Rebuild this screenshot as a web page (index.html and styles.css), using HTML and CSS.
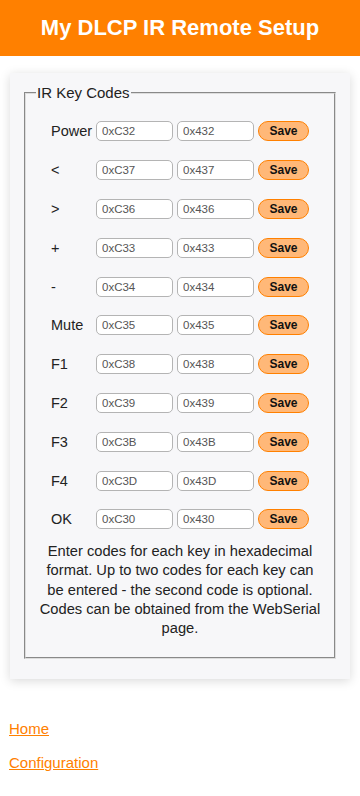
FILE: index.html
```html
<!DOCTYPE html>
<html lang="en">
<head>
  <meta charset="UTF-8" />
  <meta name="viewport" content="width=device-width, initial-scale=1" />
  <title>My DLCP IR Remote Setup</title>
  <link rel="stylesheet" href="styles.css">
</head>
<body>
  <header class="topbar">
    <h1>My DLCP IR Remote Setup</h1>
  </header>

  <div class="card">
    <fieldset class="codes">
      <legend>IR Key Codes</legend>
      <div class="key-grid">
        <label>Power</label>
        <input type="text" value="0xC32" />
        <input type="text" value="0x432" />
        <button class="save">Save</button>

        <label>&lt;</label>
        <input type="text" value="0xC37" />
        <input type="text" value="0x437" />
        <button class="save">Save</button>

        <label>&gt;</label>
        <input type="text" value="0xC36" />
        <input type="text" value="0x436" />
        <button class="save">Save</button>

        <label>+</label>
        <input type="text" value="0xC33" />
        <input type="text" value="0x433" />
        <button class="save">Save</button>

        <label>-</label>
        <input type="text" value="0xC34" />
        <input type="text" value="0x434" />
        <button class="save">Save</button>

        <label>Mute</label>
        <input type="text" value="0xC35" />
        <input type="text" value="0x435" />
        <button class="save">Save</button>

        <label>F1</label>
        <input type="text" value="0xC38" />
        <input type="text" value="0x438" />
        <button class="save">Save</button>

        <label>F2</label>
        <input type="text" value="0xC39" />
        <input type="text" value="0x439" />
        <button class="save">Save</button>

        <label>F3</label>
        <input type="text" value="0xC3B" />
        <input type="text" value="0x43B" />
        <button class="save">Save</button>

        <label>F4</label>
        <input type="text" value="0xC3D" />
        <input type="text" value="0x43D" />
        <button class="save">Save</button>

        <label>OK</label>
        <input type="text" value="0xC30" />
        <input type="text" value="0x430" />
        <button class="save">Save</button>
      </div>
      <p class="help">Enter codes for each key in hexadecimal format. Up to two codes for each key can be entered - the second code is optional. Codes can be obtained from the WebSerial page.</p>
    </fieldset>
  </div>

  <nav class="links">
    <a href="#">Home</a>
    <a href="#">Configuration</a>
  </nav>
</body>
</html>
```

FILE: styles.css
```css
body {
  margin: 0;
  padding: 0;
  background: #fff;
  font-family: 'Liberation Sans', Arial, sans-serif;
  color: #222;
}

.topbar {
  background: #ff8000;
  height: 56px;
  display: flex;
  align-items: center;
  justify-content: center;
}

.topbar h1 {
  margin: 0;
  color: #fff;
  font-size: 22px;
  font-weight: bold;
}

.card {
  margin: 17px 10px 0;
  padding: 11px 14px 20px;
  background: #f7f7f9;
  box-shadow: 0 2px 10px rgba(0, 0, 0, 0.15);
}

.codes {
  margin: 0;
  padding: 11px 6px 18px;
  border: 2px groove #ddd;
}

.codes legend {
  font-size: 15px;
  margin-left: 4px;
  padding: 0 1px;
  color: #222;
}

.key-grid {
  display: grid;
  grid-template-columns: 41px 77px 77px 51px;
  grid-auto-rows: 38.8px;
  column-gap: 4px;
  align-items: center;
  justify-content: center;
}

.key-grid label {
  font-size: 14.5px;
  margin-right: 1px;
}

.key-grid input {
  box-sizing: border-box;
  width: 77px;
  height: 20px;
  padding: 0 5px;
  border: 1px solid #b4b4b4;
  border-radius: 5px;
  background: #fff;
  font-family: 'Liberation Sans', Arial, sans-serif;
  font-size: 11.5px;
  color: #555;
}

.save {
  box-sizing: border-box;
  width: 51px;
  height: 20px;
  padding: 0;
  background: #ffb878;
  border: 1.5px solid #ff8000;
  border-radius: 10px;
  font-family: 'Liberation Sans', Arial, sans-serif;
  font-size: 12px;
  font-weight: bold;
  color: #111;
  cursor: pointer;
}

.help {
  margin: 3px 0 0;
  padding: 0 5.5px;
  text-align: center;
  font-size: 14.7px;
  line-height: 19.4px;
}

.links {
  padding: 41px 9px 0;
}

.links a {
  display: block;
  color: #ff8000;
  font-size: 15px;
  margin-bottom: 17px;
}
```
